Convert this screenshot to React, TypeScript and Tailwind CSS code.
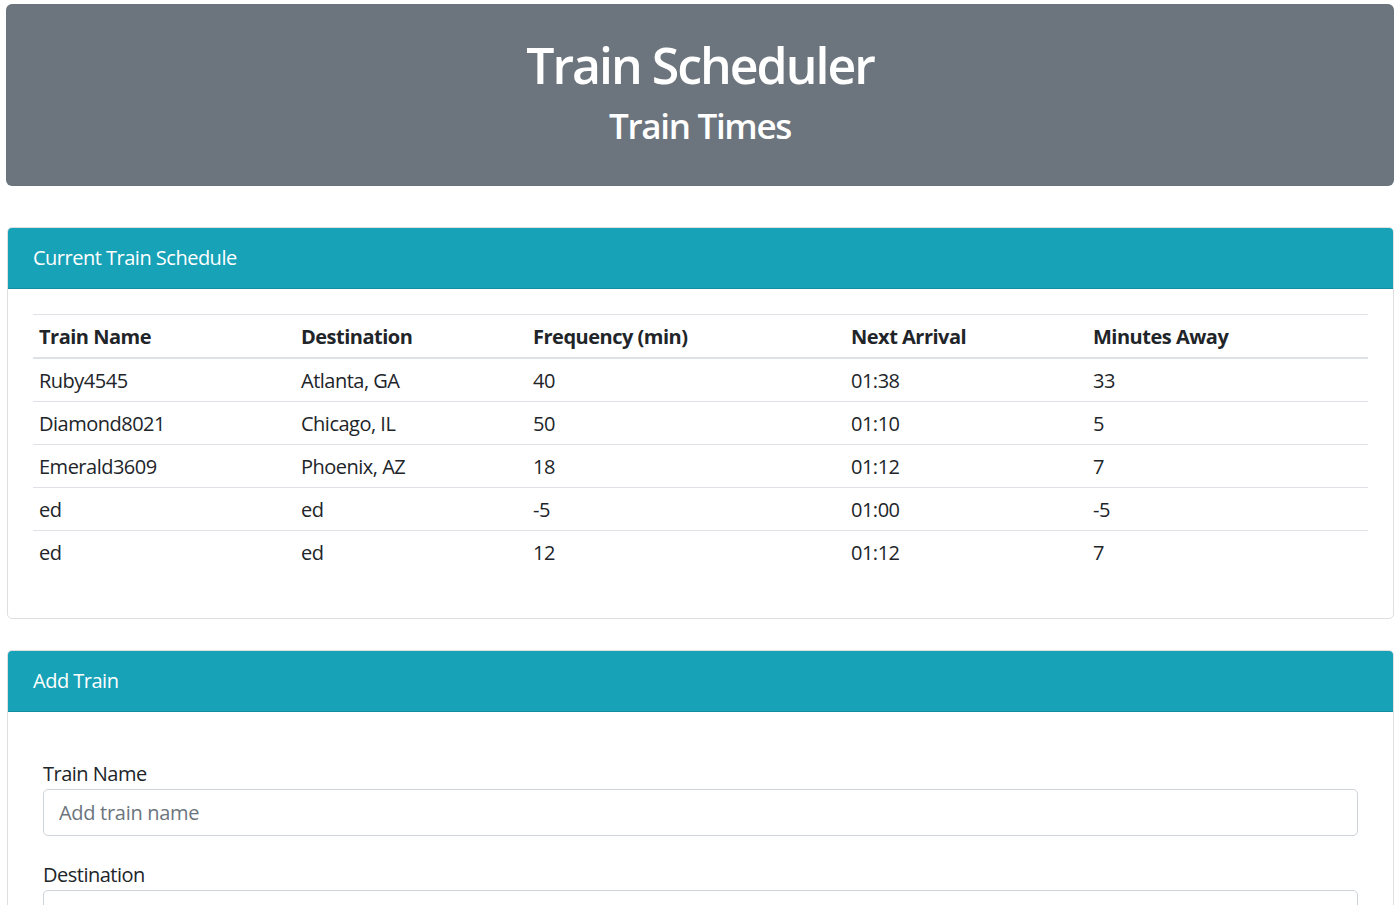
import React from "react";

const trains = [
  { name: "Ruby4545", dest: "Atlanta, GA", freq: "40", next: "01:38", away: "33" },
  { name: "Diamond8021", dest: "Chicago, IL", freq: "50", next: "01:10", away: "5" },
  { name: "Emerald3609", dest: "Phoenix, AZ", freq: "18", next: "01:12", away: "7" },
  { name: "ed", dest: "ed", freq: "-5", next: "01:00", away: "-5" },
  { name: "ed", dest: "ed", freq: "12", next: "01:12", away: "7" },
];

const App = () => {
  return (
    <div
      className="min-h-[905px] bg-white text-[20px] tracking-[-0.5px] text-[#212529] leading-[30px]"
      style={{ fontFamily: '"Open Sans", "Noto Sans", sans-serif' }}
    >
      <div className="pt-[4px] pl-[6px] pr-[3px]">
        <div className="rounded-[6px] bg-[#6c757d] pt-[31px] pb-[29px] text-center text-white">
          <h1 className="mb-[10px] text-[50px] font-semibold leading-[60px] tracking-[-2px]">Train Scheduler</h1>
          <h3 className="mb-[10px] text-[35px] font-semibold leading-[42px] tracking-[-1.3px]">Train Times</h3>
        </div>
      </div>

      <div className="pl-[7px] pr-[3px]">
        <div className="mt-[41px] rounded-[5px] border border-black/[0.125]">
          <div className="rounded-t-[4px] border-b border-black/[0.125] bg-[#17a2b8] px-[25px] py-[15px] text-white">
            Current Train Schedule
          </div>
          <div className="p-[25px]">
            <table className="mb-[20px] w-full table-fixed border-collapse text-left">
              <thead>
                <tr className="border-t border-b-2 border-t-[#dee2e6] border-b-[#dee2e6]">
                  <th className="w-[262px] px-[6px] pt-[7px] pb-[5px] font-bold">Train Name</th>
                  <th className="w-[232px] px-[6px] pt-[7px] pb-[5px] font-bold">Destination</th>
                  <th className="w-[318px] px-[6px] pt-[7px] pb-[5px] font-bold">Frequency (min)</th>
                  <th className="w-[242px] px-[6px] pt-[7px] pb-[5px] font-bold">Next Arrival</th>
                  <th className="px-[6px] pt-[7px] pb-[5px] font-bold">Minutes Away</th>
                </tr>
              </thead>
              <tbody>
                {trains.map((t, i) => (
                  <tr key={i} className={i === 0 ? "" : "border-t border-[#dee2e6]"}>
                    <td className="px-[6px] pt-[7px] pb-[5px]">{t.name}</td>
                    <td className="px-[6px] pt-[7px] pb-[5px]">{t.dest}</td>
                    <td className="px-[6px] pt-[7px] pb-[5px]">{t.freq}</td>
                    <td className="px-[6px] pt-[7px] pb-[5px]">{t.next}</td>
                    <td className="px-[6px] pt-[7px] pb-[5px]">{t.away}</td>
                  </tr>
                ))}
              </tbody>
            </table>
          </div>
        </div>

        <div className="mt-[31px] rounded-[5px] border border-black/[0.125]">
          <div className="rounded-t-[4px] border-b border-black/[0.125] bg-[#17a2b8] px-[25px] py-[15px] text-white">
            Add Train
          </div>
          <form className="px-[35px] pt-[47px] pb-[25px]">
            <div className="mb-[24px]">
              <label className="block">Train Name</label>
              <input
                type="text"
                placeholder="Add train name"
                className="block h-[47px] w-full rounded-[5px] border border-[#ced4da] px-[15px] text-[20px] tracking-[-0.3px] text-[#495057] placeholder:text-[#6c757d] outline-none"
              />
            </div>
            <div className="mb-[24px]">
              <label className="block">Destination</label>
              <input
                type="text"
                placeholder="Add destination"
                className="block h-[47px] w-full rounded-[5px] border border-[#ced4da] px-[15px] text-[20px] tracking-[-0.3px] text-[#495057] placeholder:text-[#6c757d] outline-none"
              />
            </div>
          </form>
        </div>
      </div>
    </div>
  );
};

export default App;
